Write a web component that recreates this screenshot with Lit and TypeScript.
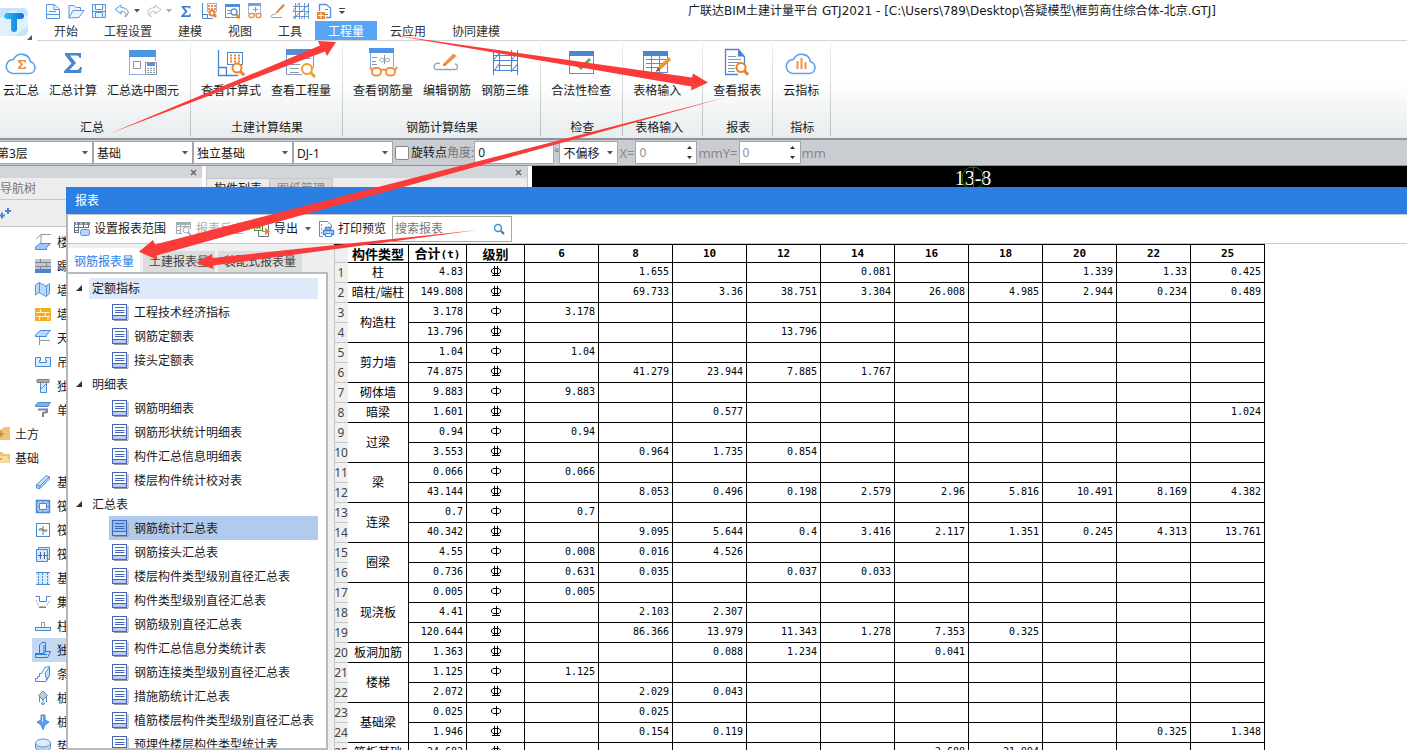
import { LitElement, html, svg, css, nothing, type TemplateResult } from "lit";
import { customElement, property } from "lit/decorators.js";
import { classMap } from "lit/directives/class-map.js";

const sigma = svg`<path d="M1 0H17V5H15.500C15 3 14 2.500 12 2.500H6L12 10 5.500 17H12C14.500 17 15.500 16 16 14H18L17 20H0V18L7.500 10.500 1 2Z"/>`;

const lens = (x: number, y: number, r: number, c = "#f0832c") => svg`
  <circle cx=${x} cy=${y} r=${r} fill="#fff" stroke=${c} stroke-width="2"/>
  <path d="M${x + r * 0.8} ${y + r * 0.8}l${r * 0.8} ${r * 0.8}" stroke=${c} stroke-width="3" fill="none"/>`;

const cloud = svg`<path d="M8 25.500H24A6 6 0 0 0 25.500 13.700 9 9 0 0 0 8.500 11.500 7 7 0 0 0 8 25.500Z" fill="#fff" stroke="#5a9fee" stroke-width="1.600"/>`;

/* Large ribbon icons, 32 x 30 */
const big: Record<string, TemplateResult> = {
  cloudSum: svg`${cloud}<path d="M13 12H21V14.500H19.500V13.500H15.500L18 16.500 15.500 19.500H19.500V18.500H21V21H13V19.500L15.500 16.500 13 13.500Z" fill="#f0924a"/>`,
  sum: svg`<g transform="translate(7 5)" fill="#4a86d0">${sigma}</g>`,
  select: svg`<rect x="2.500" y="2.500" width="26" height="24" fill="#fff" stroke="#8cb4e4"/><rect x="2" y="2" width="27" height="7" fill="#4f95e5"/><rect x="6.500" y="13.500" width="7" height="7" fill="none" stroke="#8a98a6"/><rect x="18" y="13" width="12" height="14" fill="#fff"/><rect x="18.500" y="14.500" width="11" height="12" fill="#fff" stroke="#8a98a6"/><rect x="20" y="15" width="8" height="3" fill="#4f95e5"/><path d="M20 20.500h8M20 22.500h8M20 24.500h8" stroke="#8a98a6" stroke-dasharray="2 1"/>`,
  formula: svg`<path d="M3.500 2V27.500H23M3.500 19.500H11.500V27" fill="none" stroke="#4a86d0" stroke-width="1.300"/><rect x="12.500" y="4.500" width="15" height="12" fill="#fff" stroke="#4a86d0"/><path d="M15 7.500h11M15 10.500h11M15 13.500h11" stroke="#f0832c" stroke-width="2" stroke-dasharray="2 2"/>${lens(22, 20, 4.5)}`,
  quantity: svg`<path d="M1.500 5V26.500H17M28.500 8V20" fill="none" stroke="#7a9cc4"/><rect x="1" y="1" width="28" height="6" fill="#4f8fdc"/><path d="M5 12.500h9M5 16.500h10M5 20.500h9M5 24.500h9M18 10.500h8" stroke="#8a98a6"/>${lens(22, 21, 5, "#f09a2c")}`,
  rebar: svg`<path d="M3.500 5V19M26.500 5V19" fill="none" stroke="#7aa8e4"/><rect x="2" y="0" width="25" height="5" fill="#4f95e5"/><path d="M5 9.500h5M5 13.500h4M5 16.500h5" stroke="#8a98a6"/><path d="M17.500 7v9M13 11.500c1-3 3 0 4.500 0s4-3 5 0c0 3-4 3-5 0-1 3-4 3-4.500 0" fill="none" stroke="#8a98a6"/><g fill="#fff" stroke="#f0924a" stroke-width="2"><rect x="5" y="20" width="9" height="7.500" rx="3.500"/><rect x="19" y="20" width="9" height="7.500" rx="3.500"/><path d="M14 22.500c2-1.500 3-1.500 5 0M5 22l-2-3M28 22l2-3" fill="none"/></g>`,
  edit: svg`<path d="M9 15.500C2 13.500 1 22.500 7 21.500H23C28 22.500 27 15.500 24 16" fill="none" stroke="#9aa4ae" stroke-width="1.400"/><path d="M12 18l1-3 9.500-9.500 3 2.500-10 9z" fill="#f0924a"/><path d="M12 18l1-3 2 2z" fill="#c06a28"/>`,
  grid3d: svg`<path d="M4.500 2V27M10.500 2V22M22.500 2V22M28.500 2V27M4 7.500H29M4 12.500H29M4 22.500H29M10 17.500H23M4 12.500L10.500 5M4 24L11 15M22 12.500L28.500 5M22 24L28.500 16" fill="none" stroke="#4a86d0" stroke-width="1.100"/>`,
  check: svg`<rect x="4.500" y="4.500" width="24" height="21" fill="#fff" stroke="#5a90d0"/><rect x="4" y="3" width="25" height="5" fill="#4a86d0"/><path d="M11 15l5 5 9-9" fill="none" stroke="#6aa85c" stroke-width="3"/>`,
  tableIn: svg`<rect x="2.500" y="4.500" width="24" height="20" fill="#fff" stroke="#5a90d0"/><rect x="2" y="3" width="25" height="5" fill="#4a86d0"/><path d="M5 11.500h20M5 15.500h20M5 19.500h16M10.500 8V24M18.500 8V24" stroke="#5a90d0"/><path d="M15 24l2-5 11-10 2 3-11 10z" fill="#f0941e"/><path d="M15 24l2-5 2 3z" fill="#6a5a3c"/>`,
  report: svg`<path d="M23.500 18V9L17.500 1.500H4.500V26.500H17" fill="#fff" stroke="#4a86d0" stroke-width="1.300"/><path d="M17 1V8.500H24Z" fill="#4a86d0"/><path d="M7 8.500h8M7 11.500h13M7 14.500h11M7 17.500h7M7 20.500h7M7 23.500h7" stroke="#8a98a6"/>${lens(20, 19.5, 4.5, "#ee8126")}`,
  cloudBars: svg`${cloud}<path d="M12.500 13v8M16.500 10v11M20.500 14v7" stroke="#f0924a" stroke-width="2"/>`,
};

/* Small icons, 18 x 18 */
const small: Record<string, TemplateResult> = {
  newFile: svg`<path d="M2.500 2.500H10L15.500 7V16.500H2.500ZM10 2.500V7.500H15.500M2 12.500H16M5 9.500h7" fill="#f2f8ff" stroke="#5a96dc"/>`,
  open: svg`<path d="M2 16V3.500H7L9 5.500H13.500V8M2 16L6 8.500H17L12 15.500Z" fill="#eaf3ff" stroke="#5a96dc"/>`,
  save: svg`<path d="M2.500 2.500H15.500V15.500H2.500ZM5.500 2.500V7.500H12.500V2.500M5.500 15.500V10.500H12.500V15.500M2.500 9.500H15.500" fill="#eaf3ff" stroke="#5a96dc"/>`,
  undo: svg`<path d="M8 3L2 7.500 8 12V9.500C12 9.500 14 11 12 15 18 11 15 5.500 8 5.500Z" fill="#f2f8ff" stroke="#5a96dc"/>`,
  redo: svg`<path d="M10 3L16 7.500 10 12V9.500C6 9.500 4 11 6 15 0 11 3 5.500 10 5.500Z" fill="#fafafa" stroke="#b8bcc2"/>`,
  sum: svg`<g transform="translate(4 4) scale(.55 .55)" fill="#3f7fd0">${sigma}</g>`,
  formula: svg`<path d="M2.500 1V16.500H13M2.500 12.500H7.500V16" fill="none" stroke="#4a86d0"/><path d="M8 4h8M8 7h8" stroke="#f0924a" stroke-width="2" stroke-dasharray="2 1"/><rect x="7.500" y="1.500" width="9" height="8" fill="none" stroke="#9ab8e0"/>${lens(12, 11, 2.5)}`,
  quantity: svg`<rect x="2.500" y="2.500" width="14" height="13" fill="#fff" stroke="#5a96dc"/><rect x="2" y="2" width="15" height="3" fill="#4f8fdc"/><path d="M4 8.500h4M4 11.500h4" stroke="#8a98a6"/><circle cx="11" cy="10" r="3" fill="#fff" stroke="#5a96dc" stroke-width="1.400"/><path d="M13.500 12.500l3 4" stroke="#f0832c" stroke-width="2.500"/>`,
  rebar: svg`<rect x="2.500" y="2.500" width="12" height="9" fill="#fff" stroke="#9ab8e0"/><rect x="2" y="1" width="13" height="3" fill="#6aa4ec"/><path d="M9.500 5v5M7 7.500h5" stroke="#8a98a6"/><g fill="#fff" stroke="#f0924a" stroke-width="1.400"><rect x="3" y="11.500" width="5" height="4" rx="2"/><rect x="10" y="11.500" width="5" height="4" rx="2"/></g>`,
  edit: svg`<path d="M6 12.500C1 12 1 16.500 5 15.500H13" fill="none" stroke="#9aa4ae"/><path d="M6 12l1-2 7-8 2 1.500-7.500 7.500z" fill="#f0832c"/>`,
  grid: svg`<path d="M3.500 1V17M7.500 1V17M12.500 1V17M16.500 1V17M1 4.500H17M1 9.500H17M1 14.500H17M1 9L7 1M1 17L17 2M9 17L17 9" stroke="#5a90d0" stroke-width=".9" fill="none"/>`,
  addPage: svg`<path d="M4.500 9V2.500H11L15.500 6V15.500H11" fill="#fff" stroke="#5a90d0" stroke-width="1.300"/><path d="M10 7.500h3M10 12.500h3" stroke="#5a90d0"/><rect x="2" y="10" width="8" height="7" fill="#f0832c"/><path d="M6 11v5M3 13.500h6" stroke="#fff"/>`,
  range: svg`<path d="M1.500 3.500H16M1.500 3V13M5.500 3V13M10.500 3V8M15.500 3V8M1.500 7.500H15M1.500 10.500H6M1.500 12.500H5" stroke="#6a7280" fill="none"/><rect x="1" y="2" width="16" height="3" fill="#7a828e"/><path d="M3.500 2.500v2M8 2.500v2M13 2.500v2" stroke="#fff"/><rect x="7.500" y="9.500" width="9" height="6" rx="2" fill="#b8d4fa" stroke="#4f8fdc"/>`,
  trace: svg`<path d="M1.500 2.500H15.500V9M1.500 2V13.500H7M5.500 2V13M1.500 6.500H15M10.500 3V6M1.500 10.500H6" stroke="#a8acb2" fill="none"/><rect x="1" y="2" width="15" height="3" fill="#a8acb2"/><circle cx="11" cy="10" r="3" fill="#fff" stroke="#a8acb2"/><path d="M13 12l3 4" stroke="#a8acb2" stroke-width="2"/>`,
  exportXls: svg`<path d="M5.500 1.500H12L15.500 5V16.500H5.500Z" fill="#fff" stroke="#6a7280"/><rect x="1.500" y="2.500" width="8" height="8" fill="#eaf6e0" stroke="#4c9a2a"/><path d="M3.500 4.500l4 4M7.500 4.500l-4 4" stroke="#4c9a2a" stroke-width="1.500"/><path d="M9 11.500h4M12.500 8.500l4 3-4 3z" stroke="#f0832c" fill="#f0832c"/>`,
  print: svg`<path d="M2.500 1.500H10L14.500 5V8M2.500 1V16.500H6" fill="none" stroke="#6a8cb4"/><path d="M4.500 4v11" stroke="#8a98a6" stroke-dasharray="2 2"/><path d="M8.500 7.500H13.500V10H8.500ZM6.500 10.500H16.500V14.500H6.500Z" fill="#b8d4fa" stroke="#3f88e0" stroke-width="1.400"/><path d="M8.500 13.500H14.500V16.500H8.500Z" fill="#fff" stroke="#3f88e0"/>`,
};

const B = "#4a8ad4";
/* Component tree icons, 18 x 18 */
const nav: Record<string, TemplateResult> = {
  floor: svg`<path d="M2 6L7 1.500H17M7 2V11" stroke="#8a98a6" fill="none"/><path d="M1.500 14L6 10.500H16.500L12.500 14.500V16.500H1.500Z" fill="#9cc8f8" stroke=${B}/>`,
  skirting: svg`<rect x="1" y="2" width="16" height="10" fill="#c4c8cc"/><path d="M1 5.500h16M1 9.500h16M6.500 2v3M12.500 5v5M6.500 9v3" stroke="#7c848c"/><rect x="1" y="12" width="16" height="4" fill="#4a86d0"/>`,
  wainscot: svg`<path d="M1.500 4L5 1.500 12 5 15.500 2.500V12.500L12 15.500 5 11.500 1.500 14Z" fill="#b8d8fc" stroke="#5a96dc"/><path d="M5.500 2V12M12.500 5V15" stroke="#5a96dc"/>`,
  wall: svg`<rect x="1" y="3" width="16" height="13" fill="#f5ac20"/><path d="M2 7.500h14M2 11.500h14M6.500 4v3M11.500 8v3M5.500 12v3M14 12v3" stroke="#fff0c8"/>`,
  ceiling: svg`<path d="M1.500 6L6 1.500H16.500L12.500 6V7.500H1.500Z" fill="#b8d8fc" stroke=${B}/><path d="M5.500 8V16M6 11.500H16" stroke="#8a98a6"/>`,
  suspended: svg`<path d="M1.500 4.500H6.500V7.500H5.500V9.500H12.500V7.500H11.500V4.500H16.500V13.500H1.500Z" fill="#dcecff" stroke=${B}/>`,
  column: svg`<path d="M3 2.500H15V5.500H3Z" fill="#a4a8ac" stroke="#7c848c"/><path d="M6.500 6V15.500H12.500V6" fill="#d4e8ff" stroke=${B}/><path d="M7 12l5-5" stroke=${B}/>`,
  roller: svg`<path d="M1.500 4L4 1.500H16.500L14 5.500H1.500Z" fill="#7ab4f0" stroke=${B}/><path d="M4 8.500H13V11L9 12V16" fill="none" stroke="#7c848c" stroke-width="2"/>`,
  folderAdd: svg`<path d="M0 4H6L8 2H14V15H0Z" fill="#f0c478"/><path d="M5 6v6M2 9h6" stroke="#b07818"/>`,
  folderOpen: svg`<path d="M0 3H6L8 5H14V14H0Z" fill="#f0c478"/><path d="M0 7H11L14 14H0Z" fill="#f7dca4"/><path d="M1 10h5" stroke="#b07818"/>`,
  beam: svg`<path d="M2.500 12L12 2.500 15.500 4V6L6 15.500 2.500 15Z" fill="#c4defc" stroke=${B}/><path d="M2.500 12L6 13V15M6 13L15 4" stroke=${B} fill="none"/>`,
  raft: svg`<rect x="2.500" y="3.500" width="13" height="12" fill="#fff" stroke=${B} stroke-width="1.500"/><rect x="5.500" y="6.500" width="7" height="6" fill="none" stroke=${B}/><path d="M2 5H16M2 14H16M4 3V16M14 3V16M9 3V7M9 12V16M2 9.500H6M12 9.500H16" stroke=${B} stroke-width=".8"/>`,
  raftBar: svg`<rect x="2.500" y="2.500" width="13" height="13" fill="#fff" stroke=${B}/><path d="M9 5v9M5 9h8M5 9c0-2 3-2 4 0s4 2 4 0" fill="none" stroke="#6a7280"/>`,
  raftNeg: svg`<path d="M2.500 4.500H13.500V16.500H2.500ZM4.500 4V2.500H15.500V14.500H14" fill="#d4e8ff" stroke=${B}/><path d="M6.500 7v7M10.500 7v7M4 10.500h4M9 10.500h4" stroke="#4a6a9c"/>`,
  strip: svg`<rect x="2" y="4" width="14" height="11" fill="#dcecff"/><path d="M2 3.500H16M2 15.500H16" stroke=${B}/><path d="M4.500 4v11M8.500 4v11M13.500 4v11" stroke=${B} stroke-dasharray="2 1"/>`,
  sump: svg`<path d="M1.500 3.500H5.500V8.500H12.500V3.500H16.500" fill="none" stroke=${B}/><path d="M2 7L5 13.500H12L16 7" fill="none" stroke="#7c848c" stroke-dasharray="1 1"/><path d="M5 14.500H12" stroke=${B}/>`,
  cap: svg`<path d="M7.500 10V5.500H10.500V10M5 10.500H13" fill="none" stroke="#8a98a6"/><rect x="1.500" y="10.500" width="15" height="3" fill="#dcecff" stroke=${B}/>`,
  footing: svg`<path d="M1.500 12.500H5.500V4L8 1.500H11.500V10.500H16.500L13.500 16.500H1.500Z" fill="#b8d8fc" stroke="#2f7ad8"/><path d="M5.500 12.500H10L12 10M10 4V12M1.500 13.500H13" stroke="#2f7ad8" fill="none"/>`,
  stripFoot: svg`<path d="M1.500 16.500V13.500H3.500V11.500H5.500V8.500H7.500L11 2.500 15.500 1.500V10L12 16.500Z" fill="#fff" stroke=${B}/><path d="M11 8l4.500-6V10L12.500 15z" fill="#c4defc" stroke=${B}/>`,
  pileCap: svg`<path d="M4.500 6.500L9 2 13.500 6.500 9 11Z" fill="#b8ccdc" stroke="#6a88a4"/><path d="M5.500 8v5M12.500 8v5M9 10v6M7 13.500L9 16l2-2.500" fill="none" stroke=${B}/>`,
  pile: svg`<path d="M7 2H11V7L15 9 11 12 9 16.500 7 12 3 9 7 7Z" fill="#5a9fee" stroke=${B}/><path d="M8.500 3v6" stroke="#d4e8ff"/>`,
  cushion: svg`<path d="M1.500 6V11C3 15.500 15 15.500 16.500 11V6" fill="#b8d4f4" stroke="#6a94c4"/><ellipse cx="9" cy="6" rx="7.500" ry="4" fill="#dcecff" stroke="#6a94c4"/>`,
};

const navRows: [string, string, string?][] = [
  ["floor", "楼"], ["skirting", "踢"], ["wainscot", "墙"], ["wall", "墙"], ["ceiling", "天"], ["suspended", "吊"],
  ["column", "独"], ["roller", "单"], ["folderAdd", "土方", "group"], ["folderOpen", "基础", "group"], ["beam", "基"],
  ["raft", "筏"], ["raftBar", "筏"], ["raftNeg", "筏"], ["strip", "基"], ["sump", "集"], ["cap", "柱"],
  ["footing", "独", "current"], ["stripFoot", "条"], ["pileCap", "桩"], ["pile", "桩"], ["cushion", "垫"],
];

const tabs = ["开始", "工程设置", "建模", "视图", "工具", "工程量", "云应用", "协同建模"];

const groups: { name: string; kind?: string; items: [string, string][] }[] = [
  { name: "汇总", kind: "first", items: [["cloudSum", "云汇总"], ["sum", "汇总计算"], ["select", "汇总选中图元"]] },
  { name: "土建计算结果", items: [["formula", "查看计算式"], ["quantity", "查看工程量"]] },
  { name: "钢筋计算结果", items: [["rebar", "查看钢筋量"], ["edit", "编辑钢筋"], ["grid3d", "钢筋三维"]] },
  { name: "检查", items: [["check", "合法性检查"]] },
  { name: "表格输入", kind: "wide", items: [["tableIn", "表格输入"]] },
  { name: "报表", items: [["report", "查看报表"]] },
  { name: "指标", items: [["cloudBars", "云指标"]] },
];

const reports: { name: string; items: string[] }[] = [
  { name: "定额指标", items: ["工程技术经济指标", "钢筋定额表", "接头定额表"] },
  { name: "明细表", items: ["钢筋明细表", "钢筋形状统计明细表", "构件汇总信息明细表", "楼层构件统计校对表"] },
  {
    name: "汇总表",
    items: ["钢筋统计汇总表", "钢筋接头汇总表", "楼层构件类型级别直径汇总表", "构件类型级别直径汇总表", "钢筋级别直径汇总表",
      "构件汇总信息分类统计表", "钢筋连接类型级别直径汇总表", "措施筋统计汇总表", "植筋楼层构件类型级别直径汇总表", "预埋件楼层构件类型统计表"],
  },
];

const diameters = ["6", "8", "10", "12", "14", "16", "18", "20", "22", "25"];

type Line = [total: string, grade: "A" | "B" | "C", values: string];
const members: [string, Line[]][] = [
  ["柱", [["4.83", "C", ",1.655,,,0.081,,,1.339,1.33,0.425"]]],
  ["暗柱/端柱", [["149.808", "C", ",69.733,3.36,38.751,3.304,26.008,4.985,2.944,0.234,0.489"]]],
  ["构造柱", [["3.178", "A", "3.178"], ["13.796", "C", ",,,13.796"]]],
  ["剪力墙", [["1.04", "A", "1.04"], ["74.875", "C", ",41.279,23.944,7.885,1.767"]]],
  ["砌体墙", [["9.883", "A", "9.883"]]],
  ["暗梁", [["1.601", "C", ",,0.577,,,,,,,1.024"]]],
  ["过梁", [["0.94", "A", "0.94"], ["3.553", "C", ",0.964,1.735,0.854"]]],
  ["梁", [["0.066", "A", "0.066"], ["43.144", "C", ",8.053,0.496,0.198,2.579,2.96,5.816,10.491,8.169,4.382"]]],
  ["连梁", [["0.7", "A", "0.7"], ["40.342", "C", ",9.095,5.644,0.4,3.416,2.117,1.351,0.245,4.313,13.761"]]],
  ["圈梁", [["4.55", "A", "0.008,0.016,4.526"], ["0.736", "C", "0.631,0.035,,0.037,0.033"]]],
  ["现浇板", [["0.005", "A", "0.005"], ["4.41", "B", ",2.103,2.307"], ["120.644", "C", ",86.366,13.979,11.343,1.278,7.353,0.325"]]],
  ["板洞加筋", [["1.363", "C", ",,0.088,1.234,,0.041"]]],
  ["楼梯", [["1.125", "A", "1.125"], ["2.072", "C", ",2.029,0.043"]]],
  ["基础梁", [["0.025", "A", ",0.025"], ["1.946", "C", ",0.154,0.119,,,,,,0.325,1.348"]]],
  ["筏板基础", [["24.682", "C", ",,,,,2.688,21.994"]]],
];

const caret = (c = "#555") => html`<svg class="caret" width="6" height="4" viewBox="0 0 6 4" aria-hidden="true"><path d="M0 0H6L3 3.500Z" fill=${c} /></svg>`;
const icon = (set: Record<string, TemplateResult>, name: string, w = 18, h = 18) =>
  html`<svg class="icon" width=${w} height=${h} viewBox="0 0 ${w} ${h}" fill="none" aria-hidden="true">${set[name]}</svg>`;

const base = css`
  * { box-sizing: border-box; }
  :host { font: 12px/24px "Noto Sans", "Noto Sans CJK SC", sans-serif; color: #1a1a1a; }
  button, input, select { font: inherit; color: inherit; margin: 0; padding: 0; border: 0; background: none; border-radius: 0; }
  button { white-space: nowrap; }
  svg { display: block; flex: none; }
`;

@customElement("ribbon-bar")
export class RibbonBar extends LitElement {
  static styles = [base, css`
    :host { display: block; background: #fff; }
    .head { display: grid; grid-template-columns: 37px 1fr; height: 41px; }
    .logo { padding-top: 8px; }
    .quick { display: flex; align-items: center; height: 21px; padding-left: 7px; gap: 5px; }
    .quick button { display: block; }
    .quick .pair { display: flex; align-items: center; gap: 3px; }
    .title { flex: 1; margin: 0; padding-left: 146px; text-align: center; font: 400 12px/20px "DejaVu Sans", "Noto Sans CJK SC", sans-serif; white-space: nowrap; }
    .tabs { display: flex; height: 20px; padding-left: 4px; border-bottom: 1px solid #d4d4d4; }
    .tabs button { padding: 2px 13px 0; line-height: 17px; height: 19px; color: #333; }
    .tabs .on { background: #58a5f5; color: #fff; }
    .groups { display: flex; padding: 2px 0; height: 97px; background: linear-gradient(#fff 40%, #e7ecec); }
    .group { display: flex; flex-direction: column; justify-content: space-between; padding: 0 11px 0 10px; border-right: 1px solid; border-image: linear-gradient(#f0f0f0, #b8bcbc) 1; }
    .first { padding-left: 3px; }
    .wide { padding-right: 19px; }
    .items { display: flex; gap: 10px; padding-top: 5px; }
    .items button { display: flex; flex-direction: column; align-items: center; gap: 1px; }
    .name { padding-left: 2px; text-align: center; line-height: 16px; }
  `];

  render() {
    const q = (name: string, label: string) => html`<button aria-label=${label}>${icon(small, name)}</button>`;
    return html`
      <header class="head">
        <div class="logo">
          <svg width="34" height="32" viewBox="0 0 34 32" aria-label="GTJ">
            <defs><linearGradient id="t" x1="0" x2="1"><stop offset="0" stop-color="#24c4f4" /><stop offset="1" stop-color="#1668e0" /></linearGradient></defs>
            <rect x="-5" width="33" height="28" rx="5" fill="#c4e4fa" /><path d="M0 10L12 2 28 8V18L14 28H0Z" fill="#dff1fd" />
            <path d="M6 5H21Q24 5 24 8T21 11H17V21Q17 24 14 24T11 21V11H8Q4 11 4 8Z" fill="url(#t)" />
            <path d="M32 27V32H27Z" fill="#555" />
          </svg>
        </div>
        <div>
          <div class="quick">
            ${q("newFile", "新建")}${q("open", "打开")}${q("save", "保存")}
            <span class="pair">${q("undo", "撤销")}${caret()}</span>
            <span class="pair">${q("redo", "恢复")}${caret("#aaa")}</span>
            ${q("sum", "汇总计算")}${q("formula", "查看计算式")}${q("quantity", "查看工程量")}${q("rebar", "查看钢筋量")}${q("edit", "编辑钢筋")}${q("grid", "钢筋三维")}${q("addPage", "添加")}
            <svg width="8" height="8" viewBox="0 0 8 8" aria-hidden="true"><path d="M1 1.500H7" stroke="#444" /><path d="M1 4H7L4 7Z" fill="#444" /></svg>
            <h1 class="title">广联达BIM土建计量平台 GTJ2021 - [C:\\Users\\789\\Desktop\\答疑模型\\框剪商住综合体-北京.GTJ]</h1>
          </div>
          <nav class="tabs">${tabs.map((t) => html`<button class=${classMap({ on: t === "工程量" })}>${t}</button>`)}</nav>
        </div>
      </header>
      <div class="groups">
        ${groups.map((g) => html`
          <section class="group ${g.kind ?? ""}">
            <div class="items">${g.items.map(([i, t]) => html`<button>${icon(big, i, 32, 30)}<span>${t}</span></button>`)}</div>
            <div class="name">${g.name}</div>
          </section>`)}
      </div>`;
  }
}

@customElement("option-bar")
export class OptionBar extends LitElement {
  static styles = [base, css`
    :host { display: block; overflow: hidden; background: #c9ccd1; border-top: 2px solid #8f9299; border-bottom: 1px solid #8f9299; }
    .bar { display: flex; align-items: center; height: 25px; margin-left: -7px; white-space: nowrap; }
    .field { display: grid; grid-template-columns: 1fr 14px; align-items: center; width: 100px; height: 23px; background: #fff; border: 1px solid #a4a6ab; }
    .field select, .field input { grid-area: 1 / 1 / 2 / 3; width: 100%; height: 21px; appearance: none; padding-left: 3px; outline: 0; }
    .field svg { grid-area: 1 / 2; justify-self: center; pointer-events: none; }
    .offset { width: 59px; }
    .angle { width: 80px; }
    .num { width: 62px; color: #909090; }
    .box { width: 14px; height: 14px; appearance: none; background: #fff; border: 1px solid #888; border-radius: 2px; margin: 0 2px; }
    .dim { color: #777; }
    .unit { font-size: 13px; color: #888; padding: 0 1px; }
  `];

  render() {
    const pick = (v: string, label: string, cls = "") => html`<span class="field ${cls}"><select aria-label=${label}><option>${v}</option></select>${caret()}</span>`;
    const num = (label: string) => html`<span class="field num"><input aria-label=${label} value="0" /><svg width="7" height="15" viewBox="0 0 7 15"><path d="M1 4L3.500 1 6 4ZM1 11L3.500 14 6 11Z" fill="#333" /></svg></span>`;
    return html`<div class="bar">
      ${pick("第3层", "楼层")}${pick("基础", "构件大类")}${pick("独立基础", "构件类型")}${pick("DJ-1", "构件")}
      <input class="box" type="checkbox" id="rotate" /><label for="rotate">旋转点</label>
      <label class="dim" for="angle">角度:</label>
      <span class="field angle"><input id="angle" value="0" /></span><span class="dim">°</span>
      ${pick("不偏移", "偏移", "offset")}
      <span class="unit">X=</span>${num("X")}<span class="unit">mmY=</span>${num("Y")}<span class="unit">mm</span>
    </div>`;
  }
}

@customElement("work-area")
export class WorkArea extends LitElement {
  static styles = [base, css`
    :host { display: flex; gap: 4px; background: #fff; min-height: 0; overflow: hidden; }
    .panel { display: flex; flex-direction: column; background: #ededee; }
    .left { width: 202px; }
    .mid { width: 322px; border: 1px solid #c4c6ca; border-top: 0; }
    .grip { display: flex; align-items: center; justify-content: flex-end; height: 12px; padding-right: 5px; background: #d2d5d9; }
    .caption { line-height: 22px; height: 22px; color: #777; border-bottom: 1px solid #c8c8c8; }
    .tools { display: flex; align-items: center; height: 27px; border-bottom: 1px solid #c8c8c8; }
    .list { flex: 1; margin: 0; padding: 3px 0 0; list-style: none; background: #fff; overflow: hidden; }
    .list li { display: flex; align-items: center; gap: 5px; height: 24px; margin-left: 32px; padding-left: 2px; white-space: nowrap; }
    .list span { padding-top: 2px; }
    .list .group { margin-left: -4px; padding-left: 0; gap: 1px; }
    .list .current { background: #c5d8f1; }
    .mtabs { display: flex; }
    .mtabs span { padding: 0 7px; line-height: 20px; border: 1px solid #c4c6ca; border-left: 0; }
    .mtabs .off { background: #d8d8d8; color: #888; }
    .canvas { flex: 1; background: #000; color: #fff; }
    .axis { display: grid; width: 44px; margin-left: 419px; height: 24px; }
    .axis > * { grid-area: 1 / 1; }
    .axis span { font: 20px/24px "Liberation Serif", serif; text-align: center; }
  `];

  render() {
    const close = html`<svg width="7" height="7" viewBox="0 0 7 7"><path d="M1 1L6 6M6 1L1 6" stroke="#666" stroke-width="1.400" /></svg>`;
    return html`
      <aside class="panel left">
        <div class="grip">${close}</div>
        <div class="caption">导航树</div>
        <div class="tools"><svg width="12" height="12" viewBox="0 0 12 12"><path d="M5 8.500H-1M2 5.500V11.500M5 4H11M8 1V7" stroke="#4a86d0" stroke-width="2" /></svg></div>
        <ul class="list">${navRows.map(([i, t, k]) => html`<li class=${k ?? nothing}>${icon(nav, i)}<span>${t}</span></li>`)}</ul>
      </aside>
      <section class="panel mid">
        <div class="grip">${close}</div>
        <div class="mtabs"><span>构件列表</span><span class="off">图纸管理</span></div>
      </section>
      <div class="canvas"><div class="axis">
        <span>13-8</span>
        <svg width="44" height="24" viewBox="0 0 44 24"><circle cx="22" cy="12" r="11" fill="none" stroke="#0a7a0a" /><path d="M22.500 0V24" stroke="#0a7a0a" /></svg>
      </div></div>`;
  }
}

@customElement("rebar-grade")
export class RebarGrade extends LitElement {
  @property() grade = "A";
  static styles = css`:host { display: flex; justify-content: center; } svg { display: block; }`;
  render() {
    const lines = this.grade === "C" ? "M4.500 0V10M7.500 0V10" : "M6.500 0V10";
    return html`<svg width="12" height="11" viewBox="0 0 12 11" fill="none" stroke="#000" role="img" aria-label=${this.grade}>
      <path d="M3 2.500H9L10.500 4V6L9 7.500H3L1.500 6V4Z" /><path d=${lines} />
      ${this.grade === "A" ? nothing : svg`<path d="M2 9.500H10" />`}
    </svg>`;
  }
}

@customElement("report-dialog")
export class ReportDialog extends LitElement {
  static styles = [base, css`
    :host { display: flex; flex-direction: column; overflow: hidden; background: #fff; }
    .title { margin: 0; height: 27px; padding-left: 9px; background: #2c7fe2; color: #fff; font-size: 12px; font-weight: 400; line-height: 27px; }
    .body { flex: 1; display: flex; flex-direction: column; min-height: 0; border-left: 2px solid #b4b6ba; }
    .tools { display: flex; align-items: center; height: 30px; border-top: 1px solid #c8c8c8; border-bottom: 1px solid #c8c8c8; padding-left: 5px; }
    .tools button { display: flex; align-items: center; gap: 3px; padding-right: 9px; }
    .tools .off { color: #aaa; }
    .tools .drop { padding-right: 6px; }
    .tools .drop .caret { margin-left: 4px; }
    .tools .last { padding-right: 6px; }
    .search { display: flex; align-items: center; width: 120px; height: 26px; border: 1px solid #a8a8a8; padding-right: 6px; }
    .search input { flex: 1; min-width: 0; padding-left: 2px; outline: 0; }
    .search input::placeholder { color: #777; opacity: 1; }
    .main { flex: 1; display: flex; min-height: 0; }
    .side { width: 266px; flex: none; display: flex; flex-direction: column; background: #efeff1; padding-right: 6px; }
    .tabs { display: flex; align-items: flex-end; gap: 3px; height: 28px; }
    .tabs button { padding: 0 6px; height: 21px; line-height: 21px; background: #dcdcdc; color: #444; }
    .tabs .on { height: 24px; padding-top: 3px; background: #fff; color: #2c7fe2; border-radius: 3px 3px 0 0; }
    .tree { flex: 1; background: #fff; border: 2px solid #b8babd; border-left: 0; padding: 2px 8px 0 0; overflow: hidden; }
    .tree ul { margin: 0; padding: 0; list-style: none; }
    .branch { display: flex; align-items: center; height: 24px; padding-left: 8px; gap: 6px; }
    .branch span { flex: 1; padding-left: 3px; line-height: 21px; }
    .branch .hot { background: #dde8f9; }
    .leaf { display: flex; align-items: center; gap: 5px; height: 24px; margin-left: 41px; padding-left: 2px; white-space: nowrap; }
    .leaf span { padding-top: 2px; }
    .leaf.on { background: #b1cbee; }
    .sheet { flex: 1; overflow: hidden; }
    table { border-collapse: separate; border-spacing: 0; table-layout: fixed; width: 931px; border-top: 1px solid #000; font: 12px/16px "Noto Sans CJK SC", sans-serif; color: #000; }
    .cn { width: 14px; } .ct { width: 61px; } .cw { width: 58px; } .cd { width: 74px; }
    th, td { padding: 0 0 2px; height: 20px; border-right: 1px solid #000; border-bottom: 1px solid #000; font-weight: 400; white-space: nowrap; }
    thead th { height: 18px; padding: 0; line-height: 14px; font-weight: 700; font-size: 13px; }
    thead .mono { font: 700 11px/14px "DejaVu Sans Mono", monospace; }
    tbody .no, thead .no { padding: 0; background: #f0f0f0; border-right: 0; border-bottom: 1px solid #c4c4c4; box-shadow: inset 1px 0 #c4c4c4; font: 12px/18px "Noto Sans", sans-serif; color: #444; }
    .v { padding-right: 3px; text-align: right; font: 10px/16px "DejaVu Sans Mono", monospace; }
  `];

  render() {
    let n = 0;
    return html`
      <h2 class="title">报表</h2>
      <div class="body">
        <div class="tools">
          <button>${icon(small, "range")}设置报表范围</button>
          <button class="off" disabled>${icon(small, "trace")}报表反查</button>
          <button class="drop">${icon(small, "exportXls")}导出${caret()}</button>
          <button class="last">${icon(small, "print")}打印预览</button>
          <label class="search"><input placeholder="搜索报表" aria-label="搜索报表" />
            <svg width="12" height="12" viewBox="0 0 12 12"><circle cx="5" cy="5" r="3.500" fill="none" stroke="#3a98d0" stroke-width="1.500" /><path d="M8 8l3 3" stroke="#2a78c0" stroke-width="2" /></svg></label>
        </div>
        <div class="main">
          <div class="side">
            <div class="tabs"><button class="on">钢筋报表量</button><button>土建报表量</button><button>装配式报表量</button></div>
            <div class="tree">
              ${reports.map((r, i) => html`
                <div class="branch"><svg width="7" height="7" viewBox="0 0 7 7"><path d="M6 0V6H0Z" fill="#333" /></svg><span class=${classMap({ hot: i === 0 })}>${r.name}</span></div>
                <ul>${r.items.map((t) => html`<li class=${classMap({ leaf: true, on: t === "钢筋统计汇总表" })}>
                  <svg width="18" height="18" viewBox="0 0 18 18"><path d="M3 17.500H17V3" stroke="#9a9aa6" fill="none" /><rect x="1.500" y="1.500" width="14" height="15" fill=${t === "钢筋统计汇总表" ? "#8cc0f8" : "#fff"} stroke="#4566b8" /><path d="M2 12.500H15V16H2Z" fill="#b4c8fa" /><path d="M2 12.500H15M4 4.500H13.500M4 7.500H13.500M4 9.500H13.500" stroke="#4566b8" /></svg>
                  <span>${t}</span></li>`)}</ul>`)}
            </div>
          </div>
          <div class="sheet">
            <table>
              <colgroup><col class="cn" /><col class="ct" /><col class="cw" /><col class="cw" />${diameters.map(() => html`<col class="cd" />`)}</colgroup>
              <thead><tr><th class="no"></th><th>构件类型</th><th>合计<span class="mono">(t)</span></th><th>级别</th>${diameters.map((d) => html`<th class="mono">${d}</th>`)}</tr></thead>
              <tbody>
                ${members.map(([name, lines]) => lines.map(([total, grade, values], i) => {
                  const cells = values.split(",");
                  return html`<tr><th class="no">${++n}</th>${i === 0 ? html`<th rowspan=${lines.length}>${name}</th>` : nothing}
                    <td class="v">${total}</td><td><rebar-grade grade=${grade}></rebar-grade></td>
                    ${diameters.map((_, c) => html`<td class="v">${cells[c] ?? ""}</td>`)}</tr>`;
                }))}
              </tbody>
            </table>
          </div>
        </div>
      </div>`;
  }
}

@customElement("app-root")
export class AppRoot extends LitElement {
  static styles = [base, css`
    :host { display: flex; flex-direction: column; position: relative; height: 100vh; overflow: hidden; background: #fff; }
    work-area { flex: 1; }
    report-dialog { position: absolute; top: 187px; right: 0; bottom: 0; left: 66px; }
    .marks { position: absolute; top: 0; left: 0; pointer-events: none; }
  `];

  render() {
    return html`
      <ribbon-bar></ribbon-bar>
      <option-bar></option-bar>
      <work-area></work-area>
      <report-dialog></report-dialog>
      <svg class="marks" width="740" height="280" viewBox="0 0 740 280" fill="#fb3b3a" aria-hidden="true">
        <path d="M110 133.500L320 45.500 318 41 336 42 327 56 325 51.500Z" />
        <path d="M389 34.500L692 77.500 693 73.500 708 82.500 691 90.500 691.500 86.500Z" />
        <path d="M727 97L155 244.500 153 240 139 251.700 157.500 260 156.500 255.500Z" />
        <path d="M478 230L212.500 258 212 254 196 262.700 213.500 269 213 265.500Z" />
      </svg>`;
  }
}
